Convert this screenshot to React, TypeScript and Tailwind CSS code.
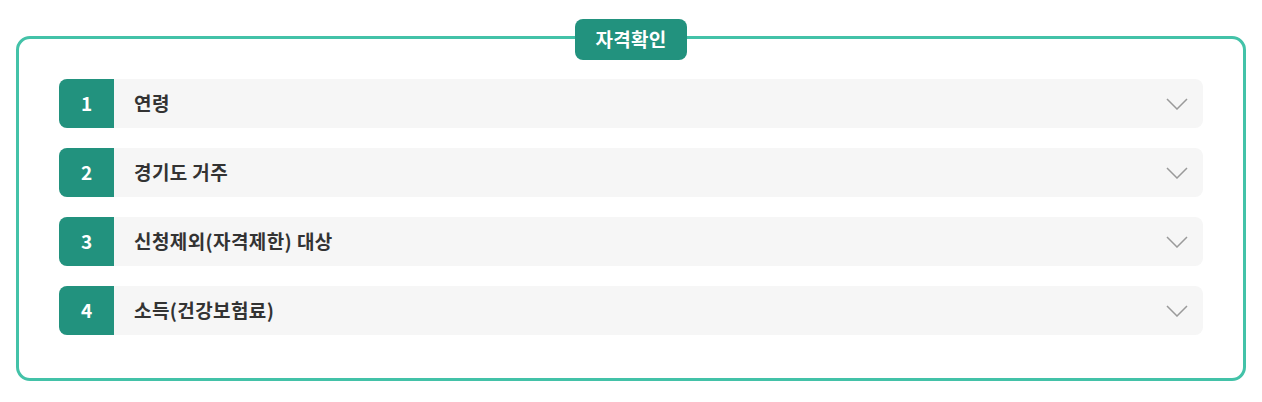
const items = [
  { no: 1, label: "연령" },
  { no: 2, label: "경기도 거주" },
  { no: 3, label: "신청제외(자격제한) 대상" },
  { no: 4, label: "소득(건강보험료)" },
];

export default function App() {
  return (
    <div
      className="min-h-[402px] bg-white px-4 pt-9"
      style={{ fontFamily: '"Noto Sans CJK KR", "Noto Sans", sans-serif' }}
    >
      <div className="relative rounded-[14px] border-[3px] border-[#43c2a8] px-10 pt-10 pb-[43px]">
        <div className="absolute left-1/2 top-[-20px] flex h-[41px] w-[112px] -translate-x-1/2 items-center justify-center rounded-lg bg-[#22927e] text-[19px] font-bold tracking-[0.3px] text-white">
          자격확인
        </div>

        <ul className="flex flex-col gap-5">
          {items.map((item) => (
            <li
              key={item.no}
              className="flex h-[49px] items-center overflow-hidden rounded-lg bg-[#f6f6f6]"
            >
              <span className="flex h-full w-[55px] shrink-0 items-center justify-center bg-[#22927e] text-[19px] font-bold text-white">
                {item.no}
              </span>
              <span className="ml-5 flex-1 text-[19px] font-bold tracking-[0.4px] text-[#333]">
                {item.label}
              </span>
              <svg
                className="mr-[15px] h-[12px] w-[22px]"
                viewBox="0 0 22 12"
                fill="none"
              >
                <polyline
                  points="1,1 11,11 21,1"
                  stroke="#9a9a9a"
                  strokeWidth="1.5"
                />
              </svg>
            </li>
          ))}
        </ul>
      </div>
    </div>
  );
}
